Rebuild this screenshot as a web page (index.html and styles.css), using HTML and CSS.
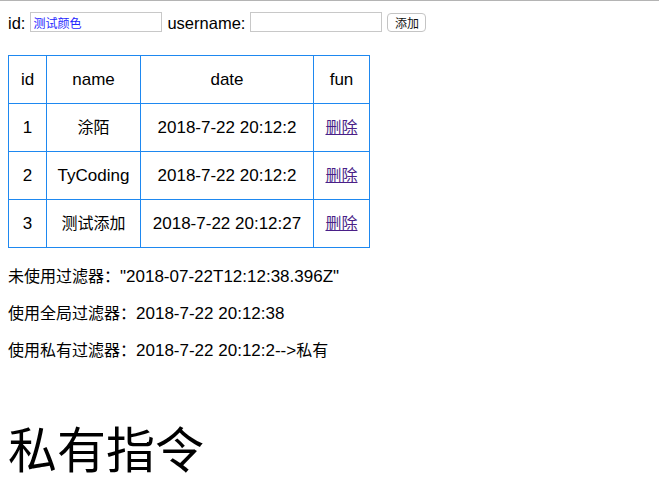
FILE: index.html
```html
<!DOCTYPE html>
<html lang="zh">
<head>
<meta charset="utf-8">
<title>filter</title>
<link rel="stylesheet" href="styles.css">
</head>
<body>
<div class="app">
  <div class="form">
    <label class="lbl">id:</label>
    <input class="field field-id" type="text" value="测试颜色">
    <label class="lbl">username:</label>
    <input class="field" type="text" value="">
    <button class="btn" type="button">添加</button>
  </div>
  <table class="grid">
    <colgroup>
      <col class="c-id">
      <col class="c-name">
      <col class="c-date">
      <col class="c-fun">
    </colgroup>
    <tr><th>id</th><th>name</th><th>date</th><th>fun</th></tr>
    <tr><td>1</td><td><span class="zh">涂陌</span></td><td>2018-7-22 20:12:2</td><td><a class="del zh" href="#">删除</a></td></tr>
    <tr><td>2</td><td>TyCoding</td><td>2018-7-22 20:12:2</td><td><a class="del zh" href="#">删除</a></td></tr>
    <tr><td>3</td><td><span class="zh">测试添加</span></td><td>2018-7-22 20:12:27</td><td><a class="del zh" href="#">删除</a></td></tr>
  </table>
  <p class="line first"><span class="zh">未使用过滤器：</span>"2018-07-22T12:12:38.396Z"</p>
  <p class="line"><span class="zh">使用全局过滤器：</span>2018-7-22 20:12:38</p>
  <p class="line"><span class="zh">使用私有过滤器：</span>2018-7-22 20:12:2--&gt;<span class="zh">私有</span></p>
  <h1 class="title">私有指令</h1>
</div>
</body>
</html>
```
FILE: styles.css
```css
html {
  border-top: 1px solid #b4b4b4;
}
body {
  margin: 0;
  padding: 7px 8px 8px;
  font-family: "Liberation Sans", "Noto Sans CJK SC", sans-serif;
  font-size: 17px;
  color: #000;
  background: #fff;
}
.zh {
  font-family: "Noto Sans CJK SC", sans-serif;
  font-size: 16px;
  line-height: 16px;
}
.form {
  display: flex;
  align-items: center;
  height: 28px;
}
.lbl {
  font-size: 16.5px;
  line-height: 20px;
  margin-right: 5px;
  margin-top: 1px;
}
.field {
  box-sizing: border-box;
  width: 132px;
  height: 20px;
  border: 1px solid #c8c8c8;
  padding: 0 2px;
  font-family: "Noto Sans CJK SC", sans-serif;
  font-size: 12px;
  margin: 0 5px 0 0;
  outline: none;
}
.field-id {
  color: #2424ff;
}
.btn {
  box-sizing: border-box;
  height: 19px;
  width: 39px;
  margin-top: 1px;
  padding: 0;
  border: 1px solid #c4c4c4;
  border-radius: 4px;
  background: #fff;
  font-family: "Noto Sans CJK SC", sans-serif;
  font-size: 12px;
  line-height: 16px;
  color: #111;
}
.grid {
  border-collapse: separate;
  border-spacing: 0;
  table-layout: fixed;
  width: 362px;
  margin-top: 19px;
  border-left: 1px solid #1e88f0;
  border-top: 1px solid #1e88f0;
}
.c-id { width: 38px; }
.c-name { width: 94px; }
.c-date { width: 173px; }
.c-fun { width: 56px; }
.grid th, .grid td {
  border-right: 1px solid #1e88f0;
  border-bottom: 1px solid #1e88f0;
  padding: 14px 0;
  height: 19px;
  text-align: center;
  line-height: 19px;
  font-size: 17px;
  white-space: nowrap;
}
.grid th {
  font-weight: normal;
}
.del {
  color: #4a1f88;
}
.line {
  margin: 16px 0;
  line-height: 21px;
}
.line.first {
  margin-top: 18px;
}
.title {
  font-size: 49px;
  font-weight: normal;
  line-height: 56px;
  margin: 58px 0 0;
  font-family: "Noto Sans CJK SC", sans-serif;
}
```
